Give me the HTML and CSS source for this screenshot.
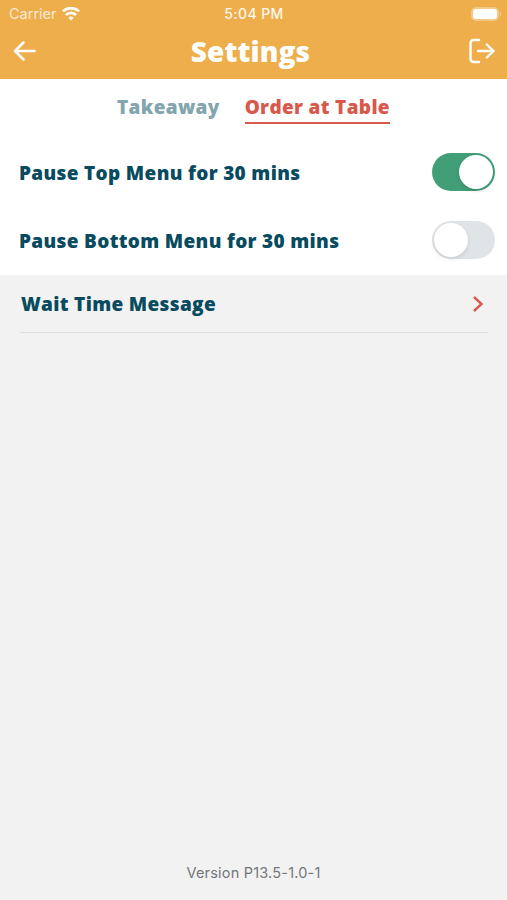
FILE: index.html
```html
<!DOCTYPE html>
<html lang="en">
<head>
<meta charset="UTF-8">
<meta name="viewport" content="width=device-width, initial-scale=1.0">
<title>Settings</title>
<link rel="stylesheet" href="styles.css">
</head>
<body>

<header class="header">
  <div class="status-bar">
    <div class="carrier">
      <span class="carrier-name">Carrier</span>
      <svg class="wifi" width="18" height="14" viewBox="0 0 18 14" fill="none" stroke="#fff" stroke-width="2.7">
        <path d="M1 4.400a11.300 11.300 0 0 1 16 0"/>
        <path d="M4 8a7 7 0 0 1 10 0"/>
        <path d="M6.400 10.800a3.700 3.700 0 0 1 5.200 0L9 13.400z" fill="#fff" stroke="none"/>
      </svg>
    </div>
    <div class="time">5:04 PM</div>
    <div class="battery"><span class="battery-body"></span><span class="battery-tip"></span></div>
  </div>
  <div class="nav-bar">
    <svg class="back" width="24" height="22" viewBox="0 0 24 22" fill="none" stroke="#fff" stroke-width="2.5" stroke-linecap="round" stroke-linejoin="round">
      <path d="M21.500 11H2.500M10.500 2.500L2 11l8.500 8.500"/>
    </svg>
    <h1 class="title">Settings</h1>
    <svg class="logout" width="27" height="26" viewBox="0 0 27 26" fill="none" stroke="#fff" stroke-width="2.4" stroke-linecap="round" stroke-linejoin="round">
      <path d="M11 2H5.500a3 3 0 0 0-3 3v16a3 3 0 0 0 3 3H11M10 13H25.500M18.800 6.500l6.700 6.500-6.700 6.500"/>
    </svg>
  </div>
</header>

<div class="tabs">
  <a class="tab">Takeaway</a>
  <a class="tab tab-active">Order at Table</a>
</div>

<div class="options">
  <div class="option">
    <span class="label">Pause Top Menu for 30 mins</span>
    <span class="switch switch-on"><span class="knob"></span></span>
  </div>
  <div class="option">
    <span class="label">Pause Bottom Menu for 30 mins</span>
    <span class="switch"><span class="knob"></span></span>
  </div>
</div>

<main class="content">
  <div class="link-row">
    <span class="label">Wait Time Message</span>
    <svg width="12" height="18" viewBox="0 0 12 18" fill="none" stroke="#d9584c" stroke-width="2.4">
      <path d="M2 2l7.500 7L2 16"/>
    </svg>
  </div>
</main>

<footer class="version">Version P13.5-1.0-1</footer>

</body>
</html>
```

FILE: styles.css
```css
* {
  box-sizing: border-box;
}
body {
  margin: 0;
  height: 900px;
  display: flex;
  flex-direction: column;
  background: #f2f2f2;
  font-family: "Open Sans", sans-serif;
}
.header {
  height: 79px;
  background: #eeae4b;
  color: #fff;
}
.status-bar {
  height: 27px;
  padding: 0 6px 0 9px;
  display: grid;
  grid-template-columns: 1fr auto 1fr;
  align-items: center;
  font-family: Inter, sans-serif;
  font-size: 14px;
}
.carrier {
  display: flex;
  align-items: center;
  gap: 5px;
}
.carrier-name {
  font-size: 14.5px;
  opacity: 0.75;
}
.time {
  margin-right: 2px;
  font-weight: 500;
  letter-spacing: 0.4px;
  opacity: 0.9;
}
.battery {
  display: flex;
  align-items: center;
  justify-content: flex-end;
  gap: 1px;
}
.battery-body {
  width: 28px;
  height: 14px;
  border: 2px solid #f3c98a;
  border-radius: 5px;
  padding: 0;
  background: #fff;
}
.battery-tip {
  width: 1px;
  height: 4px;
  border-radius: 0 1px 1px 0;
  background: #f6d39d;
}
.nav-bar {
  height: 48px;
  padding: 0 12px 0 13px;
  display: flex;
  align-items: center;
  justify-content: space-between;
}
.title {
  margin: 0 4px 0 0;
  font-size: 28px;
  font-weight: 800;
  letter-spacing: 0.1px;
  line-height: 48px;
}
.tabs {
  height: 61px;
  padding-top: 14px;
  display: flex;
  justify-content: center;
  align-items: flex-start;
  gap: 25px;
  background: #fff;
}
.tab {
  height: 31px;
  color: #82a5ae;
  font-size: 19px;
  font-weight: 800;
  letter-spacing: 0.34px;
  line-height: 28px;
}
.tab-active {
  color: #d9584c;
  border-bottom: 2px solid #d9584c;
}
.options {
  height: 135px;
  background: #fff;
}
.option {
  height: 68px;
  padding: 0 12px 4px 19px;
  display: flex;
  align-items: center;
  justify-content: space-between;
}
.label {
  color: #084a5e;
  font-size: 19px;
  font-weight: 800;
  letter-spacing: 0.33px;
}
.option .label {
  padding-top: 2px;
}
.switch {
  width: 63px;
  height: 38px;
  padding: 2px;
  display: flex;
  border-radius: 19px;
  background: #e1e4e6;
}
.switch-on {
  justify-content: flex-end;
  background: #429e76;
}
.knob {
  width: 34px;
  height: 34px;
  border-radius: 50%;
  background: #fff;
  box-shadow: 0 2px 4px rgba(0, 0, 0, 0.1);
}
.content {
  flex: 1;
}
.link-row {
  height: 58px;
  margin: 0 19px 0 20px;
  padding: 0 4px 0 1px;
  display: flex;
  align-items: center;
  justify-content: space-between;
  border-bottom: 1px solid #dcdddf;
}
.version {
  height: 40px;
  color: #74787b;
  font-family: Inter, sans-serif;
  font-size: 14.5px;
  letter-spacing: 0.2px;
  line-height: 25px;
  text-align: center;
}
```
